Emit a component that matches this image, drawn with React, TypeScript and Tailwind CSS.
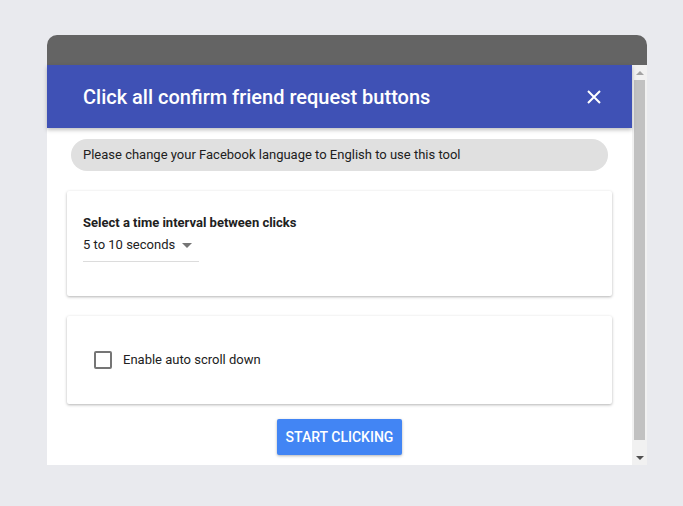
import React from "react";

const font = { fontFamily: "Roboto, 'Liberation Sans', sans-serif" };

function FakeScrollbar() {
  return (
    <div className="flex w-[15px] shrink-0 flex-col items-center bg-[#f1f1f1]">
      <div className="flex h-[15px] w-full items-center justify-center">
        <div className="h-0 w-0 border-x-[4px] border-b-[4px] border-x-transparent border-b-[#a3a3a3]" />
      </div>
      <div className="mx-auto h-[360px] w-[11px] bg-[#c1c1c1]" />
      <div className="flex-1" />
      <div className="flex h-[15px] w-full items-center justify-center">
        <div className="h-0 w-0 border-x-[4px] border-t-[4px] border-x-transparent border-t-[#505050]" />
      </div>
    </div>
  );
}

export default function App() {
  return (
    <div className="min-h-[506px] w-full bg-[#e9eaee] pt-[35px]" style={font}>
      <div className="ml-[47px] w-[600px]">
        {/* window title bar */}
        <div className="h-[30px] rounded-t-[10px] bg-[#646464]" />

        <div className="flex h-[400px] bg-white">
          <div className="flex min-w-0 flex-1 flex-col">
            {/* Header */}
            <div className="relative z-10 flex h-[63px] items-center justify-between bg-[#3f51b5] pl-[36px] pr-[28px] shadow-[0_2px_4px_rgba(0,0,0,0.25)]">
              <h1 className="text-[20px] font-medium text-white">
                Click all confirm friend request buttons
              </h1>
              <button className="flex h-[20px] w-[20px] items-center justify-center">
                <svg width="14" height="14" viewBox="0 0 14 14">
                  <path d="M1 1L13 13M13 1L1 13" stroke="white" strokeWidth="2" />
                </svg>
              </button>
            </div>

            <div className="flex flex-col px-[20px] pt-[11px]">
              <div className="mx-[4px] flex h-[32px] items-center rounded-full bg-[#e0e0e0] px-[12px] text-[13px] text-[#212121]">
                Please change your Facebook language to English to use this tool
              </div>

              {/* Card 1 */}
              <div className="mt-[20px] h-[105px] rounded-[2px] bg-white px-[16px] pt-[24px] shadow-[0_1px_3px_rgba(0,0,0,0.3)]">
                <div className="text-[13px] font-bold leading-[16px] text-[#212121]">
                  Select a time interval between clicks
                </div>
                <div className="mt-[6px] flex w-[116px] items-center border-b border-[#dcdcdc] pb-[8px] text-[13px] leading-[16px] text-[#212121]">
                  <span>5 to 10 seconds</span>
                  <span className="ml-[7px] mt-[1px] h-0 w-0 border-x-[5px] border-t-[5px] border-x-transparent border-t-[#757575]" />
                </div>
              </div>

              {/* Card 2 */}
              <div className="mt-[20px] flex h-[88px] items-center rounded-[2px] bg-white pl-[27px] shadow-[0_1px_3px_rgba(0,0,0,0.3)]">
                <span className="h-[18px] w-[18px] rounded-[2px] border-2 border-[#757575]" />
                <span className="ml-[11px] text-[13px] text-[#212121]">Enable auto scroll down</span>
              </div>

              <div className="mt-[15px] flex justify-center">
                <button className="h-[36px] w-[125px] rounded-[2px] bg-[#4285f4] text-[14px] font-medium text-white shadow-[0_1px_3px_rgba(0,0,0,0.3)]">
                  START CLICKING
                </button>
              </div>
            </div>
          </div>
          <FakeScrollbar />
        </div>
      </div>
    </div>
  );
}
